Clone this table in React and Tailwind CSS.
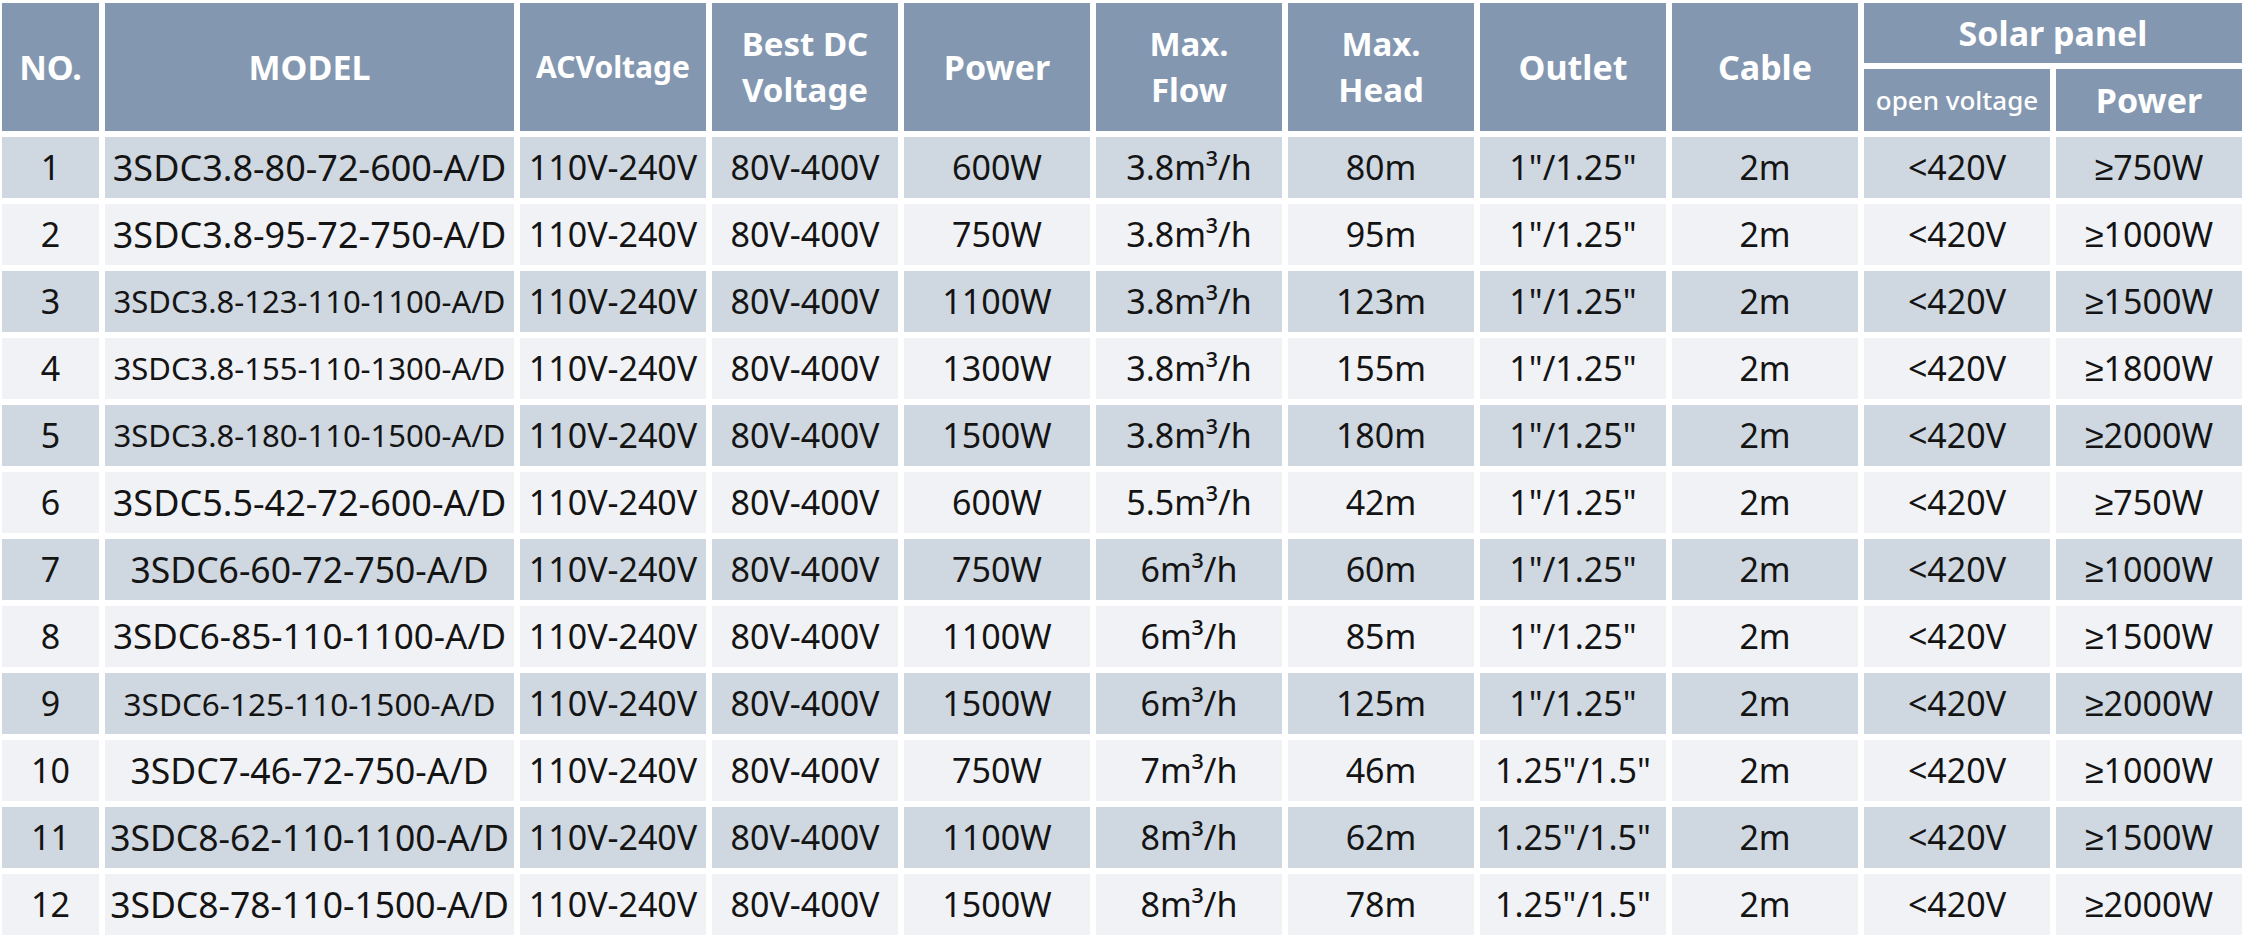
import React from "react";

const ROWS = [
  ["1", "3SDC3.8-80-72-600-A/D", "600W", "3.8m³/h", "80m", '1"/1.25"', "≥750W", "text-[36px]"],
  ["2", "3SDC3.8-95-72-750-A/D", "750W", "3.8m³/h", "95m", '1"/1.25"', "≥1000W", "text-[36px]"],
  ["3", "3SDC3.8-123-110-1100-A/D", "1100W", "3.8m³/h", "123m", '1"/1.25"', "≥1500W", "text-[31px]"],
  ["4", "3SDC3.8-155-110-1300-A/D", "1300W", "3.8m³/h", "155m", '1"/1.25"', "≥1800W", "text-[31px]"],
  ["5", "3SDC3.8-180-110-1500-A/D", "1500W", "3.8m³/h", "180m", '1"/1.25"', "≥2000W", "text-[31px]"],
  ["6", "3SDC5.5-42-72-600-A/D", "600W", "5.5m³/h", "42m", '1"/1.25"', "≥750W", "text-[36px]"],
  ["7", "3SDC6-60-72-750-A/D", "750W", "6m³/h", "60m", '1"/1.25"', "≥1000W", "text-[35.5px]"],
  ["8", "3SDC6-85-110-1100-A/D", "1100W", "6m³/h", "85m", '1"/1.25"', "≥1500W", "text-[35px]"],
  ["9", "3SDC6-125-110-1500-A/D", "1500W", "6m³/h", "125m", '1"/1.25"', "≥2000W", "text-[31.5px]"],
  ["10", "3SDC7-46-72-750-A/D", "750W", "7m³/h", "46m", '1.25"/1.5"', "≥1000W", "text-[35.5px]"],
  ["11", "3SDC8-62-110-1100-A/D", "1100W", "8m³/h", "62m", '1.25"/1.5"', "≥1500W", "text-[35.5px]"],
  ["12", "3SDC8-78-110-1500-A/D", "1500W", "8m³/h", "78m", '1.25"/1.5"', "≥2000W", "text-[35.5px]"],
];

function Head({ children, className = "" }) {
  return (
    <div
      className={
        "flex items-center justify-center bg-[#8497b0] text-center font-bold text-white leading-[46px] " +
        className
      }
    >
      {children}
    </div>
  );
}

function Cell({ children, odd, className = "text-[34px]" }) {
  return (
    <div
      className={
        "flex items-center justify-center whitespace-nowrap text-[#141414] " +
        (odd ? "bg-[#cfd7e0] " : "bg-[#f1f2f6] ") +
        className
      }
    >
      {children}
    </div>
  );
}

export default function App() {
  return (
    <div className="min-h-screen bg-white font-['Noto_Sans',sans-serif]">
      <div className="grid grid-cols-[97px_409px_repeat(9,186px)] grid-rows-[60px_62px_repeat(12,61px)] gap-[6px] px-[2px] pt-[3px]">
        <Head className="row-span-2 text-[34px]">NO.</Head>
        <Head className="row-span-2 text-[34px]">MODEL</Head>
        <Head className="row-span-2 text-[30px]">ACVoltage</Head>
        <Head className="row-span-2 text-[33px]">
          Best DC
          <br />
          Voltage
        </Head>
        <Head className="row-span-2 text-[34px]">Power</Head>
        <Head className="row-span-2 text-[33px]">
          Max.
          <br />
          Flow
        </Head>
        <Head className="row-span-2 text-[33px]">
          Max.
          <br />
          Head
        </Head>
        <Head className="row-span-2 text-[34px]">Outlet</Head>
        <Head className="row-span-2 text-[34px]">Cable</Head>
        <Head className="col-span-2 text-[34px]">Solar panel</Head>
        <Head className="text-[26px] !font-medium">open voltage</Head>
        <Head className="text-[34px]">Power</Head>

        {ROWS.map((r, i) => {
          const odd = i % 2 === 0;
          return (
            <React.Fragment key={r[0]}>
              <Cell odd={odd}>{r[0]}</Cell>
              <Cell odd={odd} className={r[7]}>
                {r[1]}
              </Cell>
              <Cell odd={odd}>110V-240V</Cell>
              <Cell odd={odd}>80V-400V</Cell>
              <Cell odd={odd}>{r[2]}</Cell>
              <Cell odd={odd}>{r[3]}</Cell>
              <Cell odd={odd}>{r[4]}</Cell>
              <Cell odd={odd}>{r[5]}</Cell>
              <Cell odd={odd}>2m</Cell>
              <Cell odd={odd}>&lt;420V</Cell>
              <Cell odd={odd}>{r[6]}</Cell>
            </React.Fragment>
          );
        })}
      </div>
    </div>
  );
}
